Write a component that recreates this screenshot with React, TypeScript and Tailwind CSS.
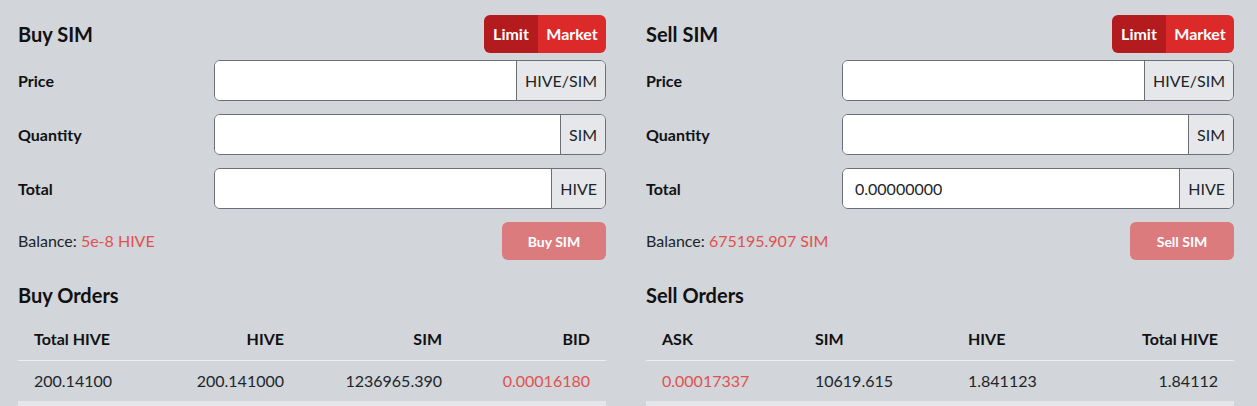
const font = { fontFamily: 'Lato, "Open Sans", sans-serif' };

type Field = { label: string; unit: string; value?: string };

function InputRow({ label, unit, value }: Field) {
  return (
    <div className="flex items-center h-[41px]">
      <div className="w-[196px] font-bold text-[16px] text-[#111]">{label}</div>
      <div className="flex flex-1 h-full rounded-[6px] border border-[#6c6f75] bg-white overflow-hidden">
        <input
          readOnly
          value={value ?? ''}
          className="flex-1 min-w-0 px-3 text-[16px] text-[#212529] bg-white outline-none"
          style={font}
        />
        <span className="flex items-center px-[8px] border-l border-[#6c6f75] bg-[#e6e7ea] text-[16px] text-[#212529]">
          {unit}
        </span>
      </div>
    </div>
  );
}

function OrderForm({ side, balance, totalValue }: { side: string; balance: string; totalValue?: string }) {
  const fields: Field[] = [
    { label: 'Price', unit: 'HIVE/SIM' },
    { label: 'Quantity', unit: 'SIM' },
    { label: 'Total', unit: 'HIVE', value: totalValue },
  ];
  return (
    <div>
      <div className="flex items-center justify-between h-[38px]">
        <h2 className="text-[20px] font-bold text-[#111]">{side} SIM</h2>
        <div className="flex h-[38px] rounded-[6px] overflow-hidden text-white font-bold text-[16px]">
          <span className="flex items-center justify-center w-[54px] bg-[#b31b1e]">Limit</span>
          <span className="flex items-center justify-center w-[68px] bg-[#dc2a2a]">Market</span>
        </div>
      </div>
      <div className="flex flex-col gap-[13px] mt-[7px]">
        {fields.map((f) => (
          <InputRow key={f.label} {...f} />
        ))}
        <div className="flex items-center justify-between h-[38px]">
          <div className="text-[16px] text-[#212529]">
            Balance: <span className="text-[#e0524f]">{balance}</span>
          </div>
          <button className="h-[38px] w-[104px] rounded-[6px] bg-[#dc7b7d] text-white font-bold text-[14px]" style={font}>
            {side} SIM
          </button>
        </div>
      </div>
    </div>
  );
}

type Col = { text: string; right?: boolean; red?: boolean };

function OrdersTable({ title, cols, widths, row }: { title: string; cols: Col[]; widths: string; row: string[] }) {
  return (
    <div className="mt-[21px]">
      <h2 className="text-[20px] font-bold text-[#111] leading-[28px]">{title}</h2>
      <div className="mt-[9px]">
        <div className={`grid ${widths} border-b border-[#eceef0] h-[43px] items-center`}>
          {cols.map((c) => (
            <div key={c.text} className={`px-4 font-bold text-[16px] text-[#111] ${c.right ? 'text-right' : ''}`}>
              {c.text}
            </div>
          ))}
        </div>
        <div className={`grid ${widths} h-[40px] items-center`}>
          {row.map((v, i) => (
            <div
              key={i}
              className={`px-4 text-[16px] ${cols[i].right ? 'text-right' : ''} ${cols[i].red ? 'text-[#e0524f]' : 'text-[#212529]'}`}
            >
              {v}
            </div>
          ))}
        </div>
        <div className="h-[40px] bg-[#e4e6e9]" />
      </div>
    </div>
  );
}

export default function App() {
  return (
    <div className="h-[406px] bg-[#d2d5d9] pl-[18px] pt-[15px] overflow-hidden" style={font}>
      <div className="grid grid-cols-[588px_588px] gap-x-[40px]">
        <div>
          <OrderForm side="Buy" balance="5e-8 HIVE" />
          <OrdersTable
            title="Buy Orders"
            widths="grid-cols-[141px_141px_158px_148px]"
            cols={[
              { text: 'Total HIVE' },
              { text: 'HIVE', right: true },
              { text: 'SIM', right: true },
              { text: 'BID', right: true, red: true },
            ]}
            row={['200.14100', '200.141000', '1236965.390', '0.00016180']}
          />
        </div>
        <div>
          <OrderForm side="Sell" balance="675195.907 SIM" totalValue="0.00000000" />
          <OrdersTable
            title="Sell Orders"
            widths="grid-cols-[153px_153px_141px_141px]"
            cols={[
              { text: 'ASK', red: true },
              { text: 'SIM' },
              { text: 'HIVE' },
              { text: 'Total HIVE', right: true },
            ]}
            row={['0.00017337', '10619.615', '1.841123', '1.84112']}
          />
        </div>
      </div>
    </div>
  );
}
